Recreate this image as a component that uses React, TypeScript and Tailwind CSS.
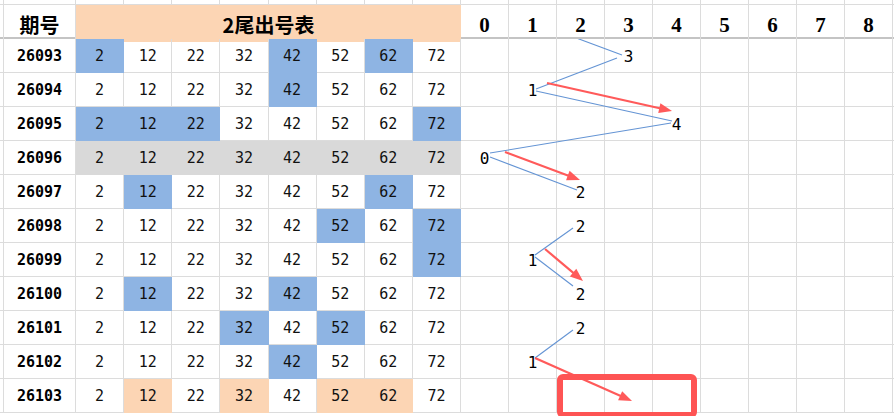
const nums = ['2', '12', '22', '32', '42', '52', '62', '72']

type Row = { id: string; blue?: number[]; peach?: number[]; gray?: boolean; digit?: number }

const rows: Row[] = [
  { id: '26093', blue: [0, 4, 6], digit: 3 },
  { id: '26094', blue: [4], digit: 1 },
  { id: '26095', blue: [0, 1, 2, 7], digit: 4 },
  { id: '26096', gray: true, digit: 0 },
  { id: '26097', blue: [1, 6], digit: 2 },
  { id: '26098', blue: [5, 7], digit: 2 },
  { id: '26099', blue: [7], digit: 1 },
  { id: '26100', blue: [1, 4], digit: 2 },
  { id: '26101', blue: [3, 5], digit: 2 },
  { id: '26102', blue: [4], digit: 1 },
  { id: '26103', peach: [1, 3, 5, 6] },
]

const cols = 'grid grid-cols-[4px_72px_repeat(8,48.125px)_repeat(9,48px)_4px]'
const line = 'border-r border-b border-[#dcdcdc]'
const mono = 'font-["DejaVu_Sans_Mono",monospace]'

function cellTone(r: Row, i: number) {
  if (r.gray) return 'bg-[#d9d9d9] border-[#d9d9d9]'
  if (r.blue?.includes(i)) return 'bg-[#8eb4e3] border-[#8eb4e3]'
  if (r.peach?.includes(i)) return 'bg-[#fcd5b4] border-[#fcd5b4]'
  return 'border-[#dcdcdc]'
}

// arrowhead triangle at the tip of a line
function head(x1: number, y1: number, x2: number, y2: number) {
  const a = Math.atan2(y2 - y1, x2 - x1)
  const len = 13
  const w = 5
  const bx = x2 - len * Math.cos(a)
  const by = y2 - len * Math.sin(a)
  const px = -Math.sin(a) * w
  const py = Math.cos(a) * w
  return `${x2},${y2} ${bx + px},${by + py} ${bx - px},${by - py}`
}

const blueLines = [
  [536, 23, 622, 55],
  [617, 58, 536, 89],
  [536, 91, 672, 121],
  [671, 123, 490, 153],
  [490, 157, 577, 190],
  [573, 228, 535, 255],
  [535, 257, 573, 286],
  [573, 330, 535, 358],
]

const redArrows = [
  [547, 83, 672, 111],
  [505, 152, 580, 180],
  [545, 249, 583, 281],
  [535, 358, 632, 401],
]

export default function App() {
  return (
    <div className="relative w-[894px] h-[416px] overflow-hidden bg-white text-black">
      {/* column header strip */}
      <div className={`${cols} h-[5px]`}>
        {Array.from({ length: 20 }).map((_, i) => (
          <div key={i} className={line} />
        ))}
      </div>

      <div className={`${cols} h-[32px]`}>
        <div className="border-r border-[#dcdcdc]" />
        <div className="border-r border-[#dcdcdc] flex items-center justify-center pt-[4px] text-[20px] font-bold font-['Noto_Sans_CJK_SC',sans-serif]">
          期号
        </div>
        <div className="col-span-8 bg-[#fcd5b4] flex items-center justify-center pt-[4px] text-[20px] font-bold font-['Noto_Sans_CJK_SC',sans-serif]">
          2尾出号表
        </div>
        {Array.from({ length: 9 }).map((_, i) => (
          <div key={i} className="border-r border-[#dcdcdc] flex items-center justify-center pt-[5px] text-[21px] font-bold font-['Liberation_Serif',serif]">
            {i}
          </div>
        ))}
        <div />
      </div>

      <div className="h-[2px] bg-[#c4c4c4]" />

      {rows.map((r) => (
        <div key={r.id} className={`${cols} h-[34px]`}>
          <div className={line} />
          <div className={`${line} flex items-center justify-center pt-[2px] text-[15px] font-bold ${mono}`}>{r.id}</div>
          {nums.map((n, i) => (
            <div key={n} className={`border-r border-b ${cellTone(r, i)} flex items-center justify-center pt-[2px] text-[15px] text-[#111] ${mono}`}>
              {n}
            </div>
          ))}
          {Array.from({ length: 9 }).map((_, k) => (
            <div key={k} className={`${line} flex items-center justify-center pt-[3px] text-[16px] ${mono}`}>
              {r.digit === k ? k : ''}
            </div>
          ))}
          <div className="border-b border-[#dcdcdc]" />
        </div>
      ))}

      <svg className="absolute left-0 top-0 pointer-events-none" width={894} height={416} viewBox="0 0 894 416">
        <defs>
          <clipPath id="body">
            <rect x={0} y={39} width={894} height={380} />
          </clipPath>
        </defs>
        <g clipPath="url(#body)">
          {blueLines.map(([x1, y1, x2, y2], i) => (
            <line key={i} x1={x1} y1={y1} x2={x2} y2={y2} stroke="#6494d4" strokeWidth={1.1} />
          ))}
          {redArrows.map(([x1, y1, x2, y2], i) => {
            const a = Math.atan2(y2 - y1, x2 - x1)
            return (
              <g key={i}>
                <line x1={x1} y1={y1} x2={x2 - 8 * Math.cos(a)} y2={y2 - 8 * Math.sin(a)} stroke="#ff5a5a" strokeWidth={2.2} />
                <polygon points={head(x1, y1, x2, y2)} fill="#ff5a5a" />
              </g>
            )
          })}
          <rect x={560} y={377} width={134} height={38} rx={3} fill="none" stroke="#fe5454" strokeWidth={6} />
        </g>
      </svg>
    </div>
  )
}
